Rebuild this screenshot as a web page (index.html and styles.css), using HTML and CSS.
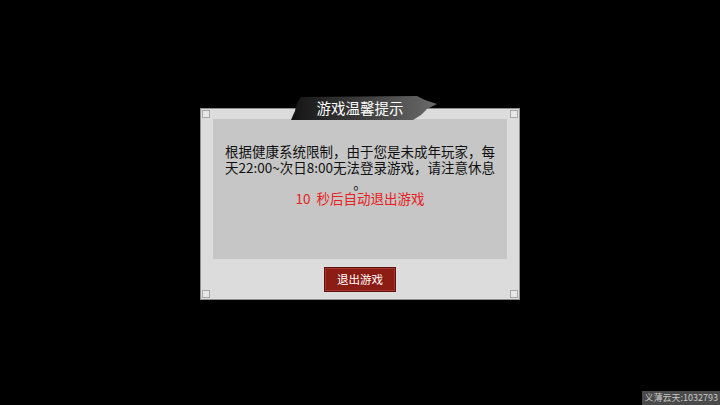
FILE: index.html
```html
<!DOCTYPE html>
<html>
<head>
<meta charset="utf-8">
<link rel="stylesheet" href="styles.css">
</head>
<body>
<div class="stage">
  <div class="dialog">
    <div class="banner">
      <svg class="banner-bg" width="150" height="26" viewBox="0 0 150 26">
        <defs>
          <linearGradient id="bg" x1="0" y1="0" x2="1" y2="0">
            <stop offset="0" stop-color="#141414"/>
            <stop offset="0.45" stop-color="#3a3a3a"/>
            <stop offset="1" stop-color="#6a6a6a"/>
          </linearGradient>
        </defs>
        <path d="M12 2 L128 1 L136 5 L148 9 L138 14 L132 20 L124 25 L2 25 Q4 20 6 16 Q7 8 12 2 Z" fill="url(#bg)"/>
      </svg>
      <span class="banner-title">游戏温馨提示</span>
    </div>
    <span class="corner tl"></span><span class="corner tr"></span>
    <span class="corner bl"></span><span class="corner br"></span>
    <div class="panel">
      <p class="msg">根据健康系统限制，由于您是未成年玩家，每<br>天22:00~次日8:00无法登录游戏，请注意休息<br>。</p>
      <p class="count">10&nbsp; 秒后自动退出游戏</p>
    </div>
    <div class="actions">
      <button class="btn">退出游戏</button>
    </div>
  </div>
</div>
<div class="watermark">义薄云天:1032793</div>
</body>
</html>
```

FILE: styles.css
```css
html, body {
  margin: 0;
  padding: 0;
  background: #000;
  width: 720px;
  height: 405px;
  overflow: hidden;
  font-family: "Noto Sans CJK SC", "Noto Sans", sans-serif;
}
.stage {
  width: 720px;
  height: 405px;
  display: flex;
  align-items: flex-start;
  justify-content: center;
  padding-top: 108px;
  box-sizing: border-box;
}
.dialog {
  position: relative;
  width: 320px;
  height: 192px;
  box-sizing: border-box;
  background: #dcdcdc;
  border: 1px solid #8e8e8e;
  padding: 10px 12px 0 12px;
  display: flex;
  flex-direction: column;
}
.banner {
  position: absolute;
  left: 88px;
  top: -14px;
  width: 150px;
  height: 26px;
}
.banner-bg {
  position: absolute;
  left: 0;
  top: 0;
}
.banner-title {
  position: absolute;
  left: 0;
  top: 0;
  width: 142px;
  height: 26px;
  line-height: 26px;
  text-align: center;
  color: #fff;
  font-size: 14.5px;
}
.corner {
  position: absolute;
  width: 6px;
  height: 6px;
  border: 1px solid #a8a8a8;
  background: #e6e6e6;
}
.corner.tl { left: 1px; top: 1px; }
.corner.tr { right: 1px; top: 1px; }
.corner.bl { left: 1px; bottom: 1px; }
.corner.br { right: 1px; bottom: 1px; }
.panel {
  height: 140px;
  background: #c6c6c6;
  padding-top: 24px;
  box-sizing: border-box;
  text-align: center;
}
.msg {
  margin: 0;
  font-size: 13.5px;
  line-height: 16px;
  color: #111;
}
.count {
  margin: -1px 0 0 0;
  font-size: 13.5px;
  line-height: 16px;
  color: #e8201c;
}
.actions {
  flex: 1;
  display: flex;
  justify-content: center;
  padding-top: 8px;
}
.btn {
  width: 72px;
  height: 25px;
  padding: 0;
  background: #8c1d15;
  border: 1px solid #5e1410;
  box-shadow: inset 0 0 0 1px #a8352b;
  color: #fff;
  font-family: "Noto Sans CJK SC", sans-serif;
  font-size: 11.5px;
  line-height: 23px;
}
.watermark {
  position: absolute;
  right: 0;
  bottom: 0;
  height: 14px;
  padding: 0 2px 0 3px;
  background: #4a4a4a;
  color: #c8c8c8;
  font-size: 9px;
  line-height: 14px;
  white-space: nowrap;
}
```
